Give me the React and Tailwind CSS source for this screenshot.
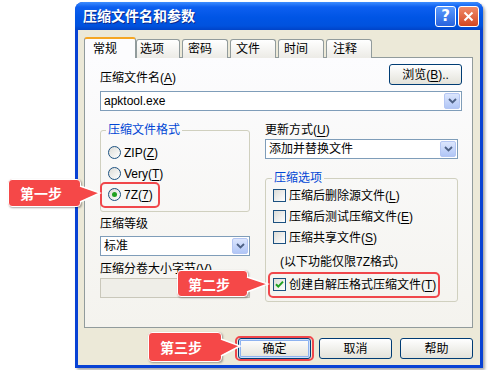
import React from "react";

function Key({ children }) {
  return <span className="underline underline-offset-2">{children}</span>;
}

function XpButton({ children, isDefault }) {
  return (
    <div
      className={
        isDefault
          ? "flex h-[21px] w-[73px] items-center justify-center rounded-[3px] border border-[#003c74] bg-gradient-to-b from-white to-[#e3e2da] shadow-[inset_0_0_0_1px_#cee0fb,inset_0_0_0_2px_#8db2f0]"
          : "flex h-[21px] w-[73px] items-center justify-center rounded-[3px] border border-[#003c74] bg-gradient-to-b from-white to-[#e3e2da]"
      }
    >
      <span className="leading-[14px]">{children}</span>
    </div>
  );
}

function Combo({ value }) {
  return (
    <div className="flex h-[20px] w-full items-center border border-[#7f9db9] bg-white">
      <span className="flex-1 pl-[3px] leading-[14px]">{value}</span>
      <div className="mr-[1px] flex h-[16px] w-[16px] items-center justify-center rounded-[2px] border border-[#b4c6f3] bg-gradient-to-b from-[#dce6fd] to-[#b1c6f6]">
        <svg width="9" height="6" viewBox="0 0 9 6">
          <path d="M1 1l3.5 3.5L8 1" stroke="#4d6185" strokeWidth="1.8" fill="none" />
        </svg>
      </div>
    </div>
  );
}

function Radio({ checked, children }) {
  return (
    <div className="flex h-[21px] items-center gap-[3px]">
      <div className="flex h-[13px] w-[13px] items-center justify-center rounded-full border border-[#1c5180] bg-gradient-to-br from-[#dcdcd7] to-white">
        {checked && <div className="h-[5px] w-[5px] rounded-full bg-[#21a121]" />}
      </div>
      <span className="leading-[14px]">{children}</span>
    </div>
  );
}

function Check({ checked, children }) {
  return (
    <div className="flex h-[21px] items-center gap-[3px]">
      <div className="flex h-[13px] w-[13px] items-center justify-center border border-[#1c5180] bg-gradient-to-br from-[#dcdcd7] to-white">
        {checked && (
          <svg width="9" height="9" viewBox="0 0 9 9">
            <path d="M1 4.2l2.3 2.4L8 1.6" stroke="#21a121" strokeWidth="2" fill="none" />
          </svg>
        )}
      </div>
      <span className="leading-[14px]">{children}</span>
    </div>
  );
}

export default function App() {
  return (
    <div className="relative h-[370px] w-[490px] overflow-hidden bg-white pt-[2px] font-['Liberation_Sans','Noto_Sans_CJK_SC',sans-serif] text-[12px] text-black">
      {/* WINDOW */}
      <div className="ml-[75px] flex h-[366px] w-[408px] flex-col overflow-hidden rounded-t-[8px] bg-[#0842d4] shadow-[2px_2px_3px_rgba(0,0,0,0.35)]">
        {/* title bar */}
        <div className="flex h-[28px] items-center bg-[linear-gradient(180deg,#3d8dff_0%,#0d5ff0_18%,#0055e5_55%,#0052de_85%,#0043c8_100%)] pl-[8px] pr-[4px]">
          <span className="flex-1 text-[14px] font-bold leading-[16px] text-white [text-shadow:1px_1px_#0b2a8c]">
            压缩文件名和参数
          </span>
          <div className="flex gap-[2px]">
            <div className="flex h-[21px] w-[21px] items-center justify-center rounded-[3px] border border-white bg-gradient-to-b from-[#5a9bff] to-[#2962dd]">
              <span className="font-['DejaVu_Sans',sans-serif] text-[15px] font-bold leading-[15px] text-white">?</span>
            </div>
            <div className="flex h-[21px] w-[21px] items-center justify-center rounded-[3px] border border-white bg-gradient-to-b from-[#f08a68] to-[#d2451e]">
              <svg width="11" height="11" viewBox="0 0 11 11">
                <path d="M1.5 1.5l8 8M9.5 1.5l-8 8" stroke="white" strokeWidth="2" />
              </svg>
            </div>
          </div>
        </div>

        {/* body */}
        <div className="mx-[3px] mb-[3px] flex flex-1 flex-col bg-[#ece9d8] pl-[6px] pr-[7px] pt-[7px]">
          {/* tabs */}
          <div className="relative z-10 -mb-[1px] flex h-[21px] items-end gap-[2px]">
            <div className="-mr-[2px] flex h-[21px] w-[52px] items-center rounded-t-[3px] border border-b-0 border-[#919b9c] border-t-[2px] border-t-[#f5a623] bg-[#fcfcfe] pl-[8px]">
              <span className="leading-[14px]">常规</span>
            </div>
            <div className="flex h-[19px] w-[44px] items-center rounded-t-[3px] border border-b-0 border-[#919b9c] bg-gradient-to-b from-white to-[#ecebe6] pl-[3px]">
              <span className="leading-[14px]">选项</span>
            </div>
            <div className="flex h-[19px] w-[46px] items-center rounded-t-[3px] border border-b-0 border-[#919b9c] bg-gradient-to-b from-white to-[#ecebe6] pl-[5px]">
              <span className="leading-[14px]">密码</span>
            </div>
            <div className="flex h-[19px] w-[46px] items-center rounded-t-[3px] border border-b-0 border-[#919b9c] bg-gradient-to-b from-white to-[#ecebe6] pl-[5px]">
              <span className="leading-[14px]">文件</span>
            </div>
            <div className="flex h-[19px] w-[46px] items-center rounded-t-[3px] border border-b-0 border-[#919b9c] bg-gradient-to-b from-white to-[#ecebe6] pl-[5px]">
              <span className="leading-[14px]">时间</span>
            </div>
            <div className="flex h-[19px] w-[46px] items-center rounded-t-[3px] border border-b-0 border-[#919b9c] bg-gradient-to-b from-white to-[#ecebe6] pl-[6px]">
              <span className="leading-[14px]">注释</span>
            </div>
          </div>

          {/* tab page */}
          <div className="h-[271px] border border-[#919b9c] bg-gradient-to-b from-[#fcfcfe] to-[#f4f3ee]">
            <div className="flex items-end justify-between pl-[15px] pr-[10px] pt-[6px]">
              <span className="leading-[14px]">
                压缩文件名(<Key>A</Key>)
              </span>
              <XpButton>
                浏览(<Key>B</Key>)..
              </XpButton>
            </div>

            <div className="ml-[15px] mr-[10px] mt-[6px]">
              <Combo value="apktool.exe" />
            </div>

            <div className="mt-[12px] flex gap-[15px] pl-[15px]">
              {/* left column */}
              <div className="flex w-[150px] flex-col">
                <fieldset className="rounded-[3px] border border-[#d0d0bf] pb-[6px] pl-[7px]">
                  <legend className="-ml-[2px] px-[2px] leading-[14px] text-[#0046d5]">压缩文件格式</legend>
                  <div className="mt-[5px] flex flex-col">
                    <Radio>
                      ZIP(<Key>Z</Key>)
                    </Radio>
                    <Radio>
                      Very(<Key>T</Key>)
                    </Radio>
                    <Radio checked>
                      7Z(<Key>7</Key>)
                    </Radio>
                  </div>
                </fieldset>
                <span className="mt-[5px] leading-[14px]">压缩等级</span>
                <div className="mt-[5px]">
                  <Combo value="标准" />
                </div>
                <span className="mt-[6px] leading-[14px]">
                  压缩分卷大小字节(<Key>V</Key>)
                </span>
                <div className="mt-[2px] h-[20px] w-full border border-[#c9c7ba] bg-[#efeee8]" />
              </div>

              {/* right column */}
              <div className="flex w-[193px] flex-col">
                <span className="leading-[14px]">
                  更新方式(<Key>U</Key>)
                </span>
                <div className="mt-[2px]">
                  <Combo value="添加并替换文件" />
                </div>
                <fieldset className="mt-[12px] rounded-[3px] border border-[#d0d0bf] pb-[6px] pl-[7px]">
                  <legend className="-ml-[1px] px-[2px] leading-[14px] text-[#0046d5]">压缩选项</legend>
                  <div className="flex flex-col">
                    <Check>
                      压缩后删除源文件(<Key>L</Key>)
                    </Check>
                    <Check>
                      压缩后测试压缩文件(<Key>E</Key>)
                    </Check>
                    <Check>
                      压缩共享文件(<Key>S</Key>)
                    </Check>
                    <div className="mt-[3px] flex h-[21px] items-center pl-[7px]">
                      <span className="leading-[14px]">(以下功能仅限7Z格式)</span>
                    </div>
                    <div className="mt-[2px]">
                      <Check checked>
                        创建自解压格式压缩文件(<Key>T</Key>)
                      </Check>
                    </div>
                  </div>
                </fieldset>
              </div>
            </div>
          </div>

          {/* buttons */}
          <div className="mt-[10px] flex justify-end gap-[8px]">
            <XpButton isDefault>确定</XpButton>
            <XpButton>取消</XpButton>
            <XpButton>帮助</XpButton>
          </div>
        </div>
      </div>

      {/* highlight frames */}
      <div className="pointer-events-none absolute left-[100px] top-[182px] h-[26px] w-[60px] rounded-[5px] border-2 border-[#f0474b]" />
      <div className="pointer-events-none absolute left-[268px] top-[272px] h-[26px] w-[172px] rounded-[5px] border-2 border-[#f0474b]" />
      <div className="pointer-events-none absolute left-[235px] top-[336px] h-[25px] w-[79px] rounded-[5px] border-2 border-[#f0474b]" />

      {/* callouts */}
      <div className="absolute left-[8px] top-[179px] flex h-[28px] w-[73px] items-center rounded-[4px] border-[1.5px] border-white bg-[#f54848] pl-[11px] shadow-[1px_1px_2px_rgba(0,0,0,0.35)]">
        <span className="font-['Noto_Sans_CJK_SC',sans-serif] text-[14px] font-bold leading-[16px] text-white">第一步</span>
      </div>
      <svg className="absolute left-[79px] top-[183px]" width="23" height="22" viewBox="0 0 23 22">
        <polygon points="0,3 21,10 0,19" fill="#f54848" />
        <polyline points="1,3 21,10 1,19" fill="none" stroke="white" strokeWidth="1.5" />
      </svg>

      <div className="absolute left-[177px] top-[270px] flex h-[27px] w-[71px] items-center rounded-[4px] border-[1.5px] border-white bg-[#f54848] pl-[10px] shadow-[1px_1px_2px_rgba(0,0,0,0.35)]">
        <span className="font-['Noto_Sans_CJK_SC',sans-serif] text-[14px] font-bold leading-[16px] text-white">第二步</span>
      </div>
      <svg className="absolute left-[246px] top-[274px]" width="24" height="22" viewBox="0 0 24 22">
        <polygon points="0,3 22,10 0,18" fill="#f54848" />
        <polyline points="1,3 22,10 1,18" fill="none" stroke="white" strokeWidth="1.5" />
      </svg>

      <div className="absolute left-[148px] top-[332px] flex h-[30px] w-[74px] items-center rounded-[4px] border-[1.5px] border-white bg-[#f54848] pl-[11px] shadow-[1px_1px_2px_rgba(0,0,0,0.35)]">
        <span className="font-['Noto_Sans_CJK_SC',sans-serif] text-[14px] font-bold leading-[16px] text-white">第三步</span>
      </div>
      <svg className="absolute left-[220px] top-[336px]" width="22" height="22" viewBox="0 0 22 22">
        <polygon points="0,3 20,10 0,20" fill="#f54848" />
        <polyline points="1,3 20,10 1,20" fill="none" stroke="white" strokeWidth="1.5" />
      </svg>
    </div>
  );
}
